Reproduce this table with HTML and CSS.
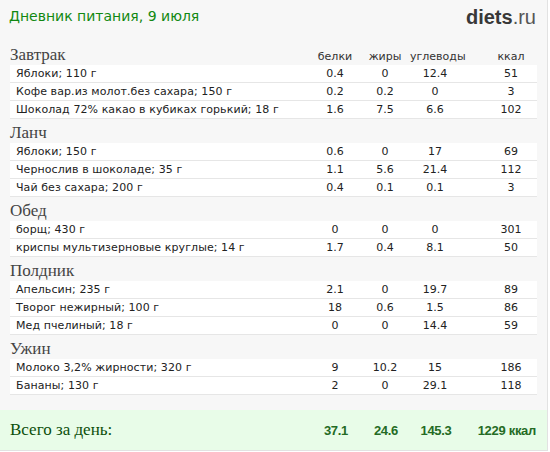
FILE: index.html
```html
<!DOCTYPE html>
<html lang="ru">
<head>
<meta charset="utf-8">
<title>Дневник питания</title>
<link rel="stylesheet" href="styles.css">
</head>
<body>
<div class="page">
  <header class="top">
    <h1 class="title">Дневник питания, 9 июля</h1>
    <div class="logo"><b>diets</b>.ru</div>
  </header>

  <section class="meal">
    <div class="head first">
      <h2 class="meal-name">Завтрак</h2>
      <span class="c c1 lbl">белки</span><span class="c c2 lbl">жиры</span><span class="c c3 lbl">углеводы</span><span class="c c4 lbl">ккал</span>
    </div>
    <div class="row"><span class="name">Яблоки; 110 г</span><span class="c c1">0.4</span><span class="c c2">0</span><span class="c c3">12.4</span><span class="c c4">51</span></div>
    <div class="row"><span class="name">Кофе вар.из молот.без сахара; 150 г</span><span class="c c1">0.2</span><span class="c c2">0.2</span><span class="c c3">0</span><span class="c c4">3</span></div>
    <div class="row"><span class="name">Шоколад 72% какао в кубиках горький; 18 г</span><span class="c c1">1.6</span><span class="c c2">7.5</span><span class="c c3">6.6</span><span class="c c4">102</span></div>
  </section>

  <section class="meal">
    <div class="head"><h2 class="meal-name">Ланч</h2></div>
    <div class="row"><span class="name">Яблоки; 150 г</span><span class="c c1">0.6</span><span class="c c2">0</span><span class="c c3">17</span><span class="c c4">69</span></div>
    <div class="row"><span class="name">Чернослив в шоколаде; 35 г</span><span class="c c1">1.1</span><span class="c c2">5.6</span><span class="c c3">21.4</span><span class="c c4">112</span></div>
    <div class="row"><span class="name">Чай без сахара; 200 г</span><span class="c c1">0.4</span><span class="c c2">0.1</span><span class="c c3">0.1</span><span class="c c4">3</span></div>
  </section>

  <section class="meal">
    <div class="head"><h2 class="meal-name">Обед</h2></div>
    <div class="row"><span class="name">борщ; 430 г</span><span class="c c1">0</span><span class="c c2">0</span><span class="c c3">0</span><span class="c c4">301</span></div>
    <div class="row"><span class="name">криспы мультизерновые круглые; 14 г</span><span class="c c1">1.7</span><span class="c c2">0.4</span><span class="c c3">8.1</span><span class="c c4">50</span></div>
  </section>

  <section class="meal">
    <div class="head"><h2 class="meal-name">Полдник</h2></div>
    <div class="row"><span class="name">Апельсин; 235 г</span><span class="c c1">2.1</span><span class="c c2">0</span><span class="c c3">19.7</span><span class="c c4">89</span></div>
    <div class="row"><span class="name">Творог нежирный; 100 г</span><span class="c c1">18</span><span class="c c2">0.6</span><span class="c c3">1.5</span><span class="c c4">86</span></div>
    <div class="row"><span class="name">Мед пчелиный; 18 г</span><span class="c c1">0</span><span class="c c2">0</span><span class="c c3">14.4</span><span class="c c4">59</span></div>
  </section>

  <section class="meal">
    <div class="head"><h2 class="meal-name">Ужин</h2></div>
    <div class="row"><span class="name">Молоко 3,2% жирности; 320 г</span><span class="c c1">9</span><span class="c c2">10.2</span><span class="c c3">15</span><span class="c c4">186</span></div>
    <div class="row"><span class="name">Бананы; 130 г</span><span class="c c1">2</span><span class="c c2">0</span><span class="c c3">29.1</span><span class="c c4">118</span></div>
  </section>

  <footer class="total">
    <span class="total-label">Всего за день:</span>
    <span class="t t1">37.1</span><span class="t t2">24.6</span><span class="t t3">145.3</span><span class="t t4">1229 ккал</span>
  </footer>
</div>
</body>
</html>
```

FILE: styles.css
```css
html, body {
  margin: 0;
  padding: 0;
  background: #ffffff;
}

.page {
  width: 547px;
  height: 450px;
  background: #f7f7f7;
  border-right: 1px solid #e2e2e2;
  border-bottom: 1px solid #e2e2e2;
  display: flex;
  flex-direction: column;
  font-family: "DejaVu Sans", Verdana, sans-serif;
  overflow: hidden;
}

.top {
  height: 40px;
  display: flex;
  justify-content: space-between;
  align-items: flex-start;
  padding: 0 11px 0 9px;
}

.title {
  margin: 7px 0 0;
  font-size: 14px;
  font-weight: normal;
  line-height: 18px;
  color: #118811;
}

.logo {
  margin-top: 5px;
  font-family: "Liberation Sans", Arial, sans-serif;
  font-size: 20px;
  line-height: 24px;
  color: #555555;
}

.logo b {
  color: #383838;
}

.meal {
  padding: 0 10px;
}

.head {
  height: 24px;
  display: flex;
  align-items: flex-end;
  box-sizing: border-box;
}

.head.first {
  height: 25px;
  align-items: baseline;
  padding-top: 6px;
}

.meal-name {
  flex: 1;
  margin: 0 0 1px;
  font-family: "Liberation Serif", "Times New Roman", serif;
  font-size: 17px;
  font-weight: normal;
  line-height: 18px;
  color: #444444;
}

.head.first .meal-name {
  margin-bottom: 0;
}

.row {
  height: 17px;
  display: flex;
  align-items: center;
  background: #ffffff;
  border-bottom: 1px solid #e6e6e6;
  font-size: 11px;
  color: #222222;
}

.name {
  flex: 1;
  padding-left: 6px;
  white-space: nowrap;
  letter-spacing: 0.08px;
}

.c {
  width: 50px;
  text-align: center;
  font-size: 11px;
}

.c4 {
  width: 52px;
  margin-left: 25px;
}

.lbl {
  color: #333333;
}

.total {
  margin-top: auto;
  height: 40px;
  display: flex;
  align-items: center;
  background: #e8fce8;
  padding: 0 11px 0 10px;
  color: #246b24;
}

.total-label {
  flex: 1;
  font-family: "Liberation Serif", "Times New Roman", serif;
  font-size: 17px;
  color: #0b4f0b;
}

.t {
  width: 50px;
  text-align: center;
  font-family: "Liberation Sans", Arial, sans-serif;
  font-weight: bold;
  font-size: 13px;
  letter-spacing: -0.3px;
}

.t4 {
  width: 75px;
  text-align: right;
}
```
